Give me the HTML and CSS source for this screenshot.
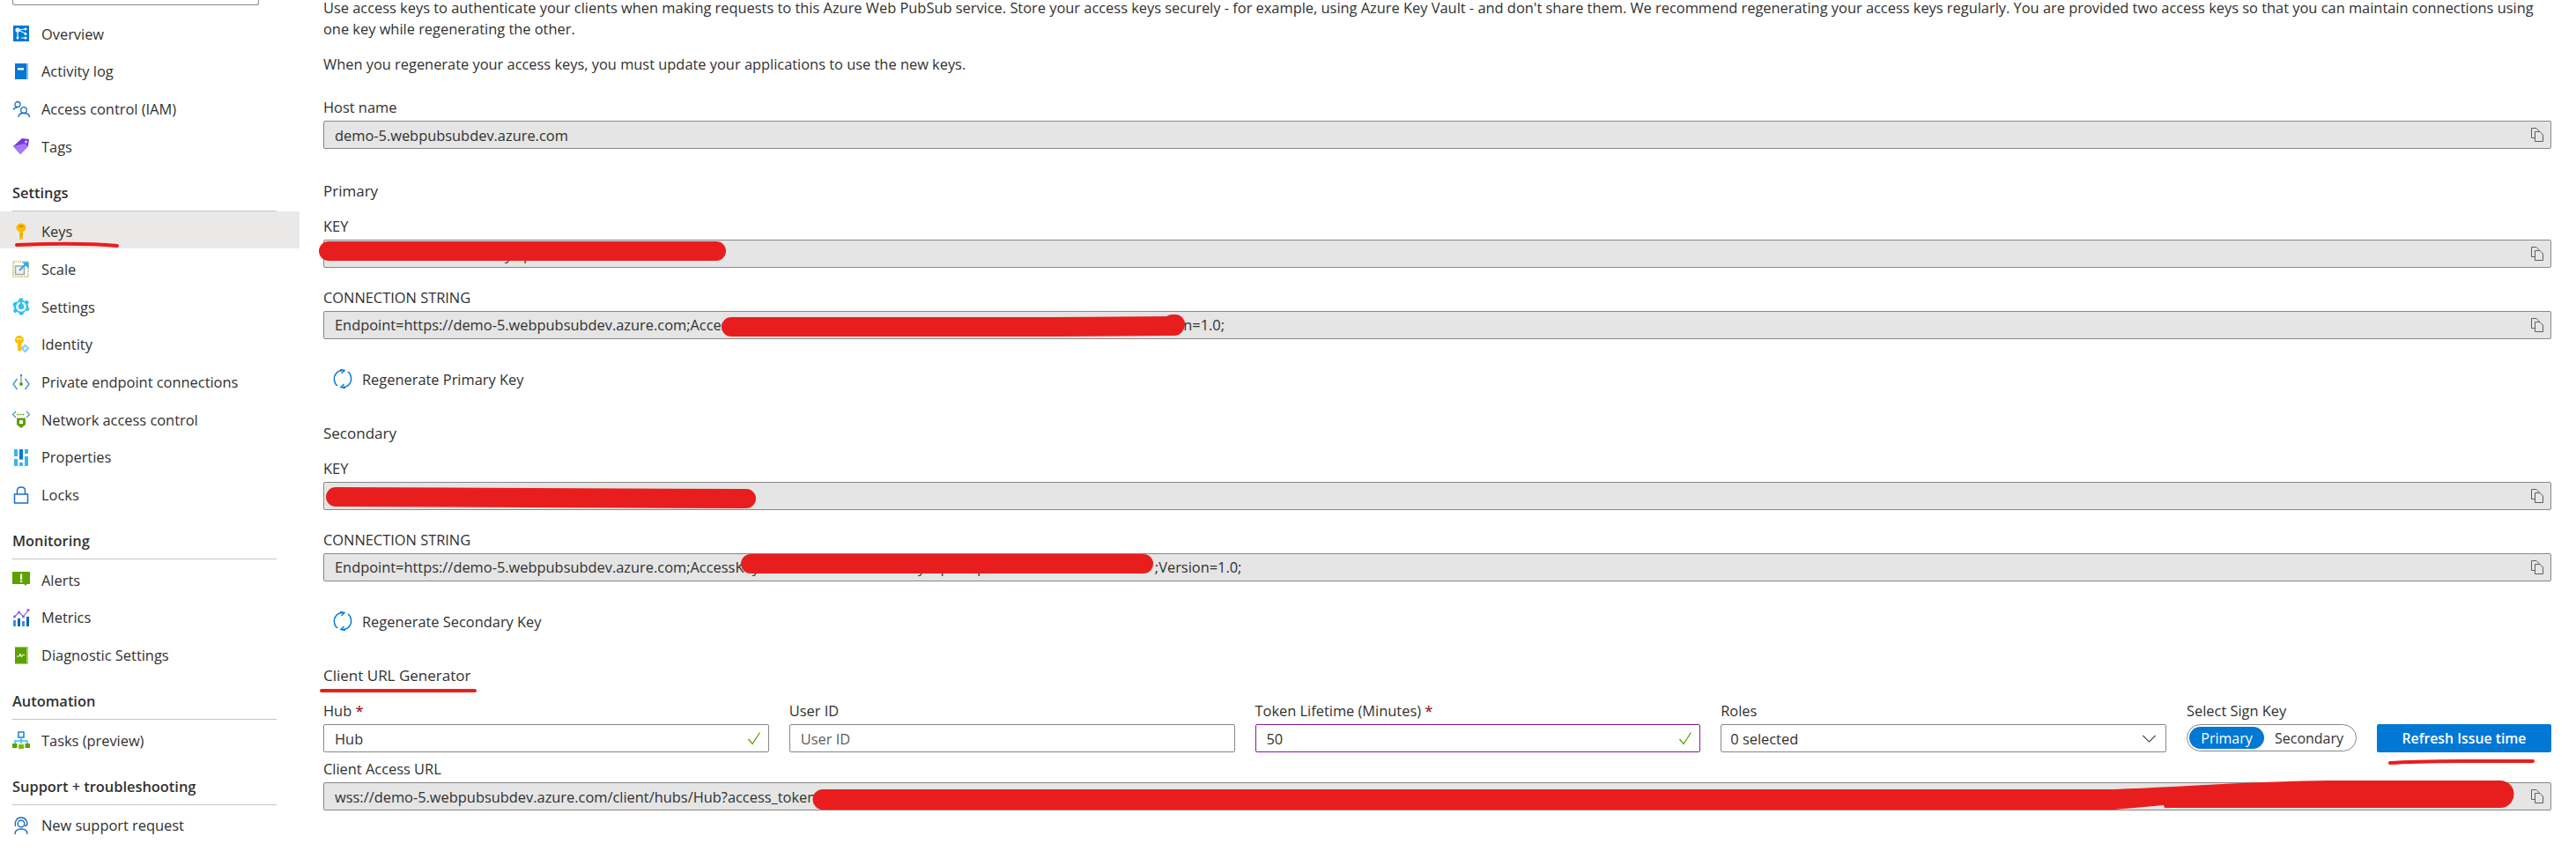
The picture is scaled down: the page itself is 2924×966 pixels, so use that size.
FILE: index.html
```html
<!DOCTYPE html>
<html lang="en">
<head>
<meta charset="utf-8">
<title>Keys</title>
<link rel="stylesheet" href="styles.css">
</head>
<body>
<div class="page">
  <aside class="sidebar">
    <div class="search"></div>
    <nav class="nav">
      <a class="row"><svg class="ico" viewBox="0 0 20 20"><rect x="1" y="1" width="18" height="18" fill="#0078d4"/><path d="M6 6L15 5M6 6L15 10M6 6L6 15M15 15L10 15" stroke="#fff" stroke-width="1.2" fill="none"/><circle cx="6" cy="6" r="2.6" fill="#e6f4fc"/><circle cx="15" cy="5" r="1.5" fill="#fff"/><circle cx="15" cy="10.500" r="1.500" fill="#fff"/><circle cx="6" cy="15" r="1.500" fill="#fff"/><circle cx="15" cy="15" r="1.500" fill="#fff"/></svg><span>Overview</span></a>
      <a class="row"><svg class="ico" viewBox="0 0 20 20"><path d="M3 1H18V19H3Z" fill="#0078d4"/><path d="M16 1H18V19H16Z" fill="#83b9f9"/><rect x="6" y="6" width="7" height="2.500" fill="#fff"/></svg><span>Activity log</span></a>
      <a class="row"><svg class="ico" viewBox="0 0 20 20"><g fill="none" stroke="#1b6ec2" stroke-width="1.300"><circle cx="6" cy="4.500" r="3"/><path d="M1 10.500C2 8.500 4 8 5.500 8"/><circle cx="13" cy="11" r="3.300"/><path d="M7 19C7 15.500 10 14.500 13 14.500S19.500 15.500 19.500 19"/></g></svg><span>Access control (IAM)</span></a>
      <a class="row"><svg class="ico" viewBox="0 0 20 20"><path d="M1 10L11 1L19 2L18 10L9 19Z" fill="#773adc"/><path d="M1 10L9 19L18 10L14 7Z" fill="#a67af4"/><circle cx="15.500" cy="5" r="1.500" fill="#d9c8f5"/></svg><span>Tags</span></a>
    </nav>
    <h2 class="head">Settings</h2>
    <nav class="nav">
      <a class="row row-active"><svg class="ico" viewBox="0 0 20 20"><path d="M10 0.500C13 0.500 15.500 2.800 15.500 5.500C15.500 7.500 14 9 12 10V17L10 19.500L8 18V10C6 9 4.500 7.500 4.500 5.500C4.500 2.800 7 0.500 10 0.500Z" fill="#ffb900"/><rect x="7.500" y="3" width="5" height="1.800" rx=".9" fill="#c98a00"/><path d="M12 12H10V14H12Z" fill="#e6a000"/></svg><span>Keys</span></a>
      <a class="row"><svg class="ico" viewBox="0 0 20 20"><rect x="1" y="1" width="17" height="17" fill="none" stroke="#7fba00" stroke-width="1.200" stroke-dasharray="1.500 1"/><rect x="3.500" y="6" width="10" height="9.500" fill="#f2f2f2" stroke="#a6a6a6" stroke-width="1.500"/><path d="M8 11L16 3" stroke="#32a8ed" stroke-width="2.200"/><path d="M11 1.500H18.500V9Z" fill="#32a8ed"/></svg><span>Scale</span></a>
      <a class="row"><svg class="ico" viewBox="0 0 20 20"><path d="M8.300 .5H11.700L12.200 3L14.500 4L16.700 2.600L19 5L17.400 7.200L18 9V11L19.800 12.200L18 15L15.500 14.500L13.500 16.500L12 19.500H8L7.500 17L5 16L3 17.500L.8 15L2.500 12.800L1.500 11V9L.2 7.500L2.500 4.800L4.500 5L6.500 3.500Z" fill="#32bfed"/><circle cx="10" cy="10" r="4.500" fill="none" stroke="#fff" stroke-width="2.500"/><rect x="8.800" y="3.500" width="2.400" height="4" fill="#32bfed"/></svg><span>Settings</span></a>
      <a class="row"><svg class="ico" viewBox="0 0 20 20"><path d="M8 0C11 0 13 2 13 5C13 7 12 8 10.500 9V16L8.500 18L6 16.500V9C4 8 3 7 3 5C3 2 5 0 8 0Z" fill="#ffc000"/><rect x="5" y="3" width="6" height="1.500" fill="#fff2b3"/><path d="M14.500 9.500L19.500 14.500L14.500 19.500L9.500 14.500Z" fill="#83c7f0"/><path d="M14.500 12L17 14.500L14.500 17L12 14.500Z" fill="#d8eefb"/></svg><span>Identity</span></a>
      <a class="row"><svg class="ico" viewBox="0 0 20 20"><path d="M5.500 6L1 12L5.500 18M14.500 6L19 12L14.500 18" fill="none" stroke="#3c91c9" stroke-width="1.300"/><path d="M10 2V12" stroke="#8a8886" stroke-width="1.200"/><circle cx="10" cy="2" r="1.300" fill="#3c91c9"/><circle cx="10" cy="12" r="2" fill="#5ea000"/></svg><span>Private endpoint connections</span></a>
      <a class="row"><svg class="ico" viewBox="0 0 20 20"><path d="M4 1L.5 4.500L4 8M16 1L19.500 4.500L16 8" fill="none" stroke="#3c91c9" stroke-width="1.200"/><path d="M5.500 4.500H14.500" stroke="#5ea000" stroke-width="1.600" stroke-dasharray="1.800 1.200"/><path d="M5 8.500H15V16L10 20L5 16Z" fill="#5ea000"/><rect x="8" y="11" width="4" height="4" rx=".6" fill="#fff"/></svg><span>Network access control</span></a>
      <a class="row"><svg class="ico" viewBox="0 0 20 20"><rect x="2" y="1" width="4" height="19" fill="#3cb4ed"/><rect x="8" y="1" width="4" height="19" fill="#3cb4ed"/><rect x="14" y="1" width="4" height="19" fill="#3cb4ed"/><rect x="2" y="9" width="4" height="3" fill="#fff"/><rect x="8" y="13" width="4" height="3" fill="#fff"/><rect x="14" y="6" width="4" height="3" fill="#fff"/><rect x="8" y="1" width="4" height="11" fill="#0078d4"/></svg><span>Properties</span></a>
      <a class="row"><svg class="ico" viewBox="0 0 20 20"><rect x="2.500" y="9" width="15" height="10" fill="#fff" stroke="#1b6ec2" stroke-width="1.500"/><path d="M5.500 9V5C5.500 2.500 7.500 1 10 1S14.500 2.500 14.500 5V9" fill="none" stroke="#1b6ec2" stroke-width="1.500"/></svg><span>Locks</span></a>
    </nav>
    <h2 class="head">Monitoring</h2>
    <nav class="nav">
      <a class="row"><svg class="ico" viewBox="0 0 20 20"><path d="M0 1H20V15H16V17L13 15H0Z" fill="#5ea000"/><rect x="9" y="3.500" width="2.200" height="6.500" fill="#fff"/><rect x="9" y="11" width="2.200" height="2" fill="#fff"/></svg><span>Alerts</span></a>
      <a class="row"><svg class="ico" viewBox="0 0 20 20"><rect x="1" y="13" width="3" height="7" fill="#3c91e6"/><rect x="6" y="11" width="3" height="9" fill="#0063b1"/><rect x="11" y="14" width="3" height="6" fill="#3c91e6"/><rect x="16" y="9" width="3" height="11" fill="#0063b1"/><path d="M2.500 9L7.500 4L12.500 9L18 1.500" fill="none" stroke="#8f5fe0" stroke-width="1.200"/><circle cx="2.500" cy="9" r="1.500" fill="#8f5fe0"/><circle cx="7.500" cy="4" r="1.500" fill="#8f5fe0"/><circle cx="12.500" cy="9" r="1.500" fill="#8f5fe0"/><circle cx="18" cy="1.500" r="1.500" fill="#8f5fe0"/></svg><span>Metrics</span></a>
      <a class="row"><svg class="ico" viewBox="0 0 20 20"><path d="M3 0.500H18V19.500H3Z" fill="#5ea000"/><path d="M16 0.500H18V19.500H16Z" fill="#a3d65c"/><path d="M5 11H8L9 8L10.500 12L11.500 9.500H14" fill="none" stroke="#fff" stroke-width="1"/></svg><span>Diagnostic Settings</span></a>
    </nav>
    <h2 class="head">Automation</h2>
    <nav class="nav">
      <a class="row"><svg class="ico" viewBox="0 0 20 20"><rect x="7" y="1" width="6" height="6" fill="#fff" stroke="#1b7fd4" stroke-width="1.500"/><path d="M10 7V11M3 14V11H17V14M10 11V14" fill="none" stroke="#32bfed" stroke-width="1.500"/><rect x="0" y="14" width="5.500" height="5" fill="#5ea000"/><rect x="7" y="15" width="6" height="5" fill="#7fba00"/><rect x="14.500" y="14" width="5.500" height="5" fill="#5ea000"/></svg><span>Tasks (preview)</span></a>
    </nav>
    <h2 class="head">Support + troubleshooting</h2>
    <nav class="nav">
      <a class="row"><svg class="ico" viewBox="0 0 20 20"><g fill="none" stroke="#1b6ec2" stroke-width="1.400"><circle cx="10" cy="8" r="3.800"/><path d="M3.500 11C2 6 5 1 10 1S18 6 16.500 10M14 10.500L16.500 10"/><path d="M3 20C3 16 6 14 10 14S17 16 17 20"/></g></svg><span>New support request</span></a>
    </nav>
  </aside>

  <main class="main">
    <p class="text"><span class="line line-top">Use access keys to authenticate your clients when making requests to this Azure Web PubSub service. Store your access keys securely - for example, using Azure Key Vault - and don't share them. We recommend regenerating your access keys regularly. You are provided two access keys so that you can maintain connections using</span><span class="line">one key while regenerating the other.</span></p>
    <p class="text text-next">When you regenerate your access keys, you must update your applications to use the new keys.</p>

    <div class="field field-host">
      <label class="label">Host name</label>
      <div class="box box-ro"><span class="val">demo-5.webpubsubdev.azure.com</span><svg class="copy" viewBox="0 0 14 16"><path d="M.5 .5H6L9 3.500V11.500H.5Z" fill="none" stroke="#605e5c"/><path d="M4.500 4.500H10L13.500 8V15.500H4.500Z" fill="#e5e5e5" stroke="#605e5c"/></svg></div>
    </div>

    <h3 class="title title-group">Primary</h3>
    <div class="field field-first">
      <label class="label">KEY</label>
      <div class="box box-ro"><span class="val">xxxxxxxxxxxxxxxxxxxxxx y xp</span><svg class="copy" viewBox="0 0 14 16"><path d="M.5 .5H6L9 3.500V11.500H.5Z" fill="none" stroke="#605e5c"/><path d="M4.500 4.500H10L13.500 8V15.500H4.500Z" fill="#e5e5e5" stroke="#605e5c"/></svg></div>
    </div>
    <div class="field field-next">
      <label class="label">CONNECTION STRING</label>
      <div class="box box-ro"><span class="val">Endpoint=https://demo-5.webpubsubdev.azure.com;Access<span class="mask mask-a"></span>on=1.0;</span><svg class="copy" viewBox="0 0 14 16"><path d="M.5 .5H6L9 3.500V11.500H.5Z" fill="none" stroke="#605e5c"/><path d="M4.500 4.500H10L13.500 8V15.500H4.500Z" fill="#e5e5e5" stroke="#605e5c"/></svg></div>
    </div>
    <button class="regen"><svg class="regen-ico" viewBox="0 0 22 22"><g fill="none" stroke="#0078d4" stroke-width="1.400"><path d="M5 19C1 16 0 9 3.500 5C5.500 2.500 8 1.500 11 1.500"/><path d="M8 .5L13 1.500L9.500 5"/><path d="M17 3C21 6 22 13 18.500 17C16.500 19.500 14 20.500 11 20.500"/><path d="M14 21.500L9 20.500L12.500 17"/></g></svg>Regenerate Primary Key</button>

    <h3 class="title title-second">Secondary</h3>
    <div class="field field-first">
      <label class="label">KEY</label>
      <div class="box box-ro"><span class="copy-spacer"></span><svg class="copy" viewBox="0 0 14 16"><path d="M.5 .5H6L9 3.500V11.500H.5Z" fill="none" stroke="#605e5c"/><path d="M4.500 4.500H10L13.500 8V15.500H4.500Z" fill="#e5e5e5" stroke="#605e5c"/></svg></div>
    </div>
    <div class="field field-next">
      <label class="label">CONNECTION STRING</label>
      <div class="box box-ro"><span class="val">Endpoint=https://demo-5.webpubsubdev.azure.com;AccessKey<span class="mask mask-b">xxxxxxxxxxxxxxxxxxxxxyxxpxxxq</span>;Version=1.0;</span><svg class="copy" viewBox="0 0 14 16"><path d="M.5 .5H6L9 3.500V11.500H.5Z" fill="none" stroke="#605e5c"/><path d="M4.500 4.500H10L13.500 8V15.500H4.500Z" fill="#e5e5e5" stroke="#605e5c"/></svg></div>
    </div>
    <button class="regen"><svg class="regen-ico" viewBox="0 0 22 22"><g fill="none" stroke="#0078d4" stroke-width="1.400"><path d="M5 19C1 16 0 9 3.500 5C5.500 2.500 8 1.500 11 1.500"/><path d="M8 .5L13 1.500L9.500 5"/><path d="M17 3C21 6 22 13 18.500 17C16.500 19.500 14 20.500 11 20.500"/><path d="M14 21.500L9 20.500L12.500 17"/></g></svg>Regenerate Secondary Key</button>

    <h3 class="title title-gen">Client URL Generator</h3>
    <div class="gen">
      <div class="cell">
        <label class="label">Hub <b class="req">*</b></label>
        <div class="box"><span class="val">Hub</span><svg class="check" viewBox="0 0 16 16"><path d="M1.500 9L6 14.500L14.500 1.500" fill="none" stroke="#57a300" stroke-width="1.300"/></svg></div>
      </div>
      <div class="cell">
        <label class="label">User ID</label>
        <div class="box"><span class="val val-ph">User ID</span></div>
      </div>
      <div class="cell">
        <label class="label">Token Lifetime (Minutes) <b class="req">*</b></label>
        <div class="box box-focus"><span class="val">50</span><svg class="check" viewBox="0 0 16 16"><path d="M1.500 9L6 14.500L14.500 1.500" fill="none" stroke="#57a300" stroke-width="1.300"/></svg></div>
      </div>
      <div class="cell">
        <label class="label">Roles</label>
        <div class="box box-select"><span class="val">0 selected</span><svg class="chev" viewBox="0 0 18 10"><path d="M1 1L9 9L17 1" fill="none" stroke="#323130" stroke-width="1.200"/></svg></div>
      </div>
      <div class="cell">
        <label class="label">Select Sign Key</label>
        <div class="toggle"><span class="opt opt-on">Primary</span><span class="opt">Secondary</span></div>
      </div>
      <div class="cell cell-btn">
        <button class="primary">Refresh Issue time</button>
      </div>
    </div>
    <div class="field field-url">
      <label class="label">Client Access URL</label>
      <div class="box box-ro"><span class="val">wss://demo-5.webpubsubdev.azure.com/client/hubs/Hub?access_token</span><svg class="copy" viewBox="0 0 14 16"><path d="M.5 .5H6L9 3.500V11.500H.5Z" fill="none" stroke="#605e5c"/><path d="M4.500 4.500H10L13.500 8V15.500H4.500Z" fill="#e5e5e5" stroke="#605e5c"/></svg></div>
    </div>
  </main>

  <svg class="ink" viewBox="0 0 2924 966" aria-hidden="true">
    <g fill="none" stroke="#e81e1e" stroke-linecap="round">
      <path d="M373 285H813" stroke-width="22"/>
      <path d="M830 371H1200L1333 370" stroke-width="22"/>
      <path d="M1331 368H1334" stroke-width="22"/>
      <path d="M381 564C560 564 600 566 847 566" stroke-width="22"/>
      <path d="M852 640H1298" stroke-width="22"/>
      <path d="M19 278C70 276 100 276 133 279" stroke-width="4"/>
      <path d="M365 784H539" stroke-width="4"/>
      <path d="M2713 866C2750 863 2800 864 2875 864" stroke-width="4"/>
    </g>
    <path d="M934 896H2400C2470 894 2560 886 2660 886H2838A15.500 15.500 0 0 1 2838 917H2457L2456 914L2400 919H934A11.500 11.500 0 0 1 934 896Z" fill="#e81e1e"/>
  </svg>
</div>
</body>
</html>
```

FILE: styles.css
```css
* { box-sizing: border-box; }
html, body { margin: 0; padding: 0; background: #fff; }
body {
  height: 966px;
  overflow: hidden;
  font-family: "Open Sans", "Noto Sans", sans-serif;
  font-size: 16.4px;
  color: #323130;
}
.page { position: relative; display: flex; width: 2924px; height: 966px; overflow: hidden; }

.sidebar { flex: 0 0 340px; width: 340px; }
.search {
  width: 280px;
  height: 6px;
  margin: 0 0 9px 14px;
  border: 1px solid #8a8886;
  border-top: 0;
  border-radius: 0 0 3px 3px;
}
.nav { display: flex; flex-direction: column; }
.row {
  display: flex;
  align-items: center;
  gap: 13px;
  height: 42.67px;
  padding: 4px 0 0 14px;
  white-space: nowrap;
}
.row-active { background: #ebe9e7; }
.ico { width: 20px; height: 20px; flex: none; }
.head {
  width: 300px;
  height: 54px;
  margin: 0 0 0 14px;
  padding-top: 21px;
  border-bottom: 1px solid #c8c6c4;
  font-size: 16.4px;
  font-weight: 600;
  line-height: 24px;
  white-space: nowrap;
}

.main { flex: 1; padding: 0 28px 0 27px; min-width: 0; }
.text { margin: 0; line-height: 23px; white-space: nowrap; }
.line { display: block; }
.line-top { line-height: 18px; margin-bottom: 2.5px; }
.text-next { margin-top: 17.5px; }
.field { display: flex; flex-direction: column; gap: 5px; }
.field-host { margin-top: 28px; }
.field-first { margin-top: 20px; }
.field-next { margin-top: 23.5px; }
.field-url { margin-top: 9px; }
.label { display: block; height: 20px; line-height: 20px; white-space: nowrap; }
.req { color: #a4262c; font-weight: 600; }
.title { margin: 0; height: 20px; font-size: 17px; font-weight: 400; line-height: 20px; }
.title-group { margin-top: 38px; }
.title-second { margin-top: 37px; }
.title-gen { margin-top: 37px; }

.box {
  display: flex;
  align-items: center;
  height: 32px;
  padding: 0 8px 0 12px;
  border: 1px solid #8a8886;
  border-radius: 2px;
  background: #fff;
  white-space: nowrap;
}
.box-ro { background: #e5e5e5; }
.box-focus { border-color: #881798; }
.box-select { padding-left: 10px; }
.val { flex: 1; min-width: 0; }
.val-ph { color: #605e5c; }
.copy-spacer { flex: 1; }
.copy { width: 14px; height: 16px; flex: none; }
.check { width: 16px; height: 16px; flex: none; }
.chev { width: 17px; height: 9px; flex: none; margin-right: 2px; }
.mask { display: inline-block; }
.mask-a { width: 499px; }
.mask-b { width: 449px; }

.regen {
  display: flex;
  align-items: center;
  gap: 11px;
  height: 30px;
  margin: 30.5px 0 0;
  padding: 0 0 0 11px;
  border: 0;
  background: none;
  color: #323130;
  font: inherit;
}
.regen-ico { width: 22px; height: 22px; flex: none; }

.gen {
  display: grid;
  grid-template-columns: repeat(4, 1fr) 193px 198px;
  column-gap: 23px;
  margin-top: 20px;
}
.cell { display: flex; flex-direction: column; gap: 5px; min-width: 0; }
.cell-btn { justify-content: flex-end; }
.toggle {
  display: flex;
  align-items: center;
  height: 31px;
  padding: 0 2px;
  border: 1px solid #8a8886;
  border-radius: 16px;
  font-size: 16px;
}
.opt { display: flex; align-items: center; justify-content: center; height: 25px; width: 104px; white-space: nowrap; }
.opt-on { flex: none; width: 85px; border-radius: 13px; background: #0078d4; color: #fff; }
.primary {
  height: 32px;
  border: 0;
  border-radius: 2px;
  background: #0078d4;
  color: #fff;
  font: inherit;
  font-size: 15.8px;
  font-weight: 600;
  white-space: nowrap;
}

.ink { position: absolute; left: 0; top: 0; width: 2924px; height: 966px; pointer-events: none; }
```
